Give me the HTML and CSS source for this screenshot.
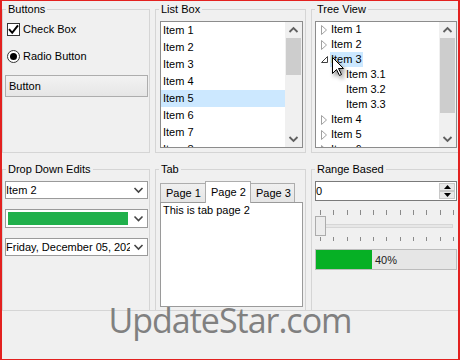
FILE: index.html
```html
<!DOCTYPE html>
<html>
<head>
<meta charset="utf-8">
<title>Controls</title>
<link rel="stylesheet" href="styles.css">
</head>
<body>
<div class="win">
  <div class="grid">
    <div class="group">
      <div class="legend">Buttons</div>
      <div class="opt-row check-row">
        <span class="checkbox"><svg width="11" height="11" viewBox="0 0 11 11"><path d="M1 5.2 L4.2 8.8 L10 1.4" fill="none" stroke="#000" stroke-width="2"/></svg></span>
        <span>Check Box</span>
      </div>
      <div class="opt-row radio-row">
        <span class="radio"><span class="dot"></span></span>
        <span>Radio Button</span>
      </div>
      <div class="button">Button</div>
    </div>

    <div class="group">
      <div class="legend">List Box</div>
      <div class="box listbox">
        <div class="items">
          <div class="item">Item 1</div>
          <div class="item">Item 2</div>
          <div class="item">Item 3</div>
          <div class="item">Item 4</div>
          <div class="item sel">Item 5</div>
          <div class="item">Item 6</div>
          <div class="item">Item 7</div>
          <div class="item">Item 8</div>
        </div>
        <div class="vscroll">
          <div class="sbtn"><svg width="17" height="16" viewBox="0 0 17 16"><path d="M4.5 10 L8.5 6 L12.5 10" fill="none" stroke="#606060" stroke-width="1.8"/></svg></div>
          <div class="thumb list-thumb"></div>
          <div class="sfill"></div>
          <div class="sbtn"><svg width="17" height="16" viewBox="0 0 17 16"><path d="M4.5 6 L8.5 10 L12.5 6" fill="none" stroke="#606060" stroke-width="1.8"/></svg></div>
        </div>
      </div>
    </div>

    <div class="group">
      <div class="legend">Tree View</div>
      <div class="box treebox">
        <div class="items">
          <div class="trow"><span class="tog"><svg width="14" height="15" viewBox="0 0 14 15"><path d="M5.5 3.5 L10.5 8 L5.5 12.5 Z" fill="none" stroke="#a0a0a0"/></svg></span><span class="tlabel">Item 1</span></div>
          <div class="trow"><span class="tog"><svg width="14" height="15" viewBox="0 0 14 15"><path d="M5.5 3.5 L10.5 8 L5.5 12.5 Z" fill="none" stroke="#a0a0a0"/></svg></span><span class="tlabel">Item 2</span></div>
          <div class="trow"><span class="tog"><svg width="14" height="15" viewBox="0 0 14 15"><path d="M11.5 4.5 L11.5 10.5 L5.5 10.5 Z" fill="none" stroke="#404040"/></svg></span><span class="tlabel sel">Item 3</span></div>
          <div class="trow child"><span class="tog"></span><span class="tlabel">Item 3.1</span></div>
          <div class="trow child"><span class="tog"></span><span class="tlabel">Item 3.2</span></div>
          <div class="trow child"><span class="tog"></span><span class="tlabel">Item 3.3</span></div>
          <div class="trow"><span class="tog"><svg width="14" height="15" viewBox="0 0 14 15"><path d="M5.5 3.5 L10.5 8 L5.5 12.5 Z" fill="none" stroke="#a0a0a0"/></svg></span><span class="tlabel">Item 4</span></div>
          <div class="trow"><span class="tog"><svg width="14" height="15" viewBox="0 0 14 15"><path d="M5.5 3.5 L10.5 8 L5.5 12.5 Z" fill="none" stroke="#a0a0a0"/></svg></span><span class="tlabel">Item 5</span></div>
          <div class="trow"><span class="tog"><svg width="14" height="15" viewBox="0 0 14 15"><path d="M5.5 3.5 L10.5 8 L5.5 12.5 Z" fill="none" stroke="#a0a0a0"/></svg></span><span class="tlabel">Item 6</span></div>
        </div>
        <div class="vscroll">
          <div class="sbtn"><svg width="17" height="16" viewBox="0 0 17 16"><path d="M4.5 10 L8.5 6 L12.5 10" fill="none" stroke="#606060" stroke-width="1.8"/></svg></div>
          <div class="thumb tree-thumb"></div>
          <div class="sfill"></div>
          <div class="sbtn"><svg width="17" height="16" viewBox="0 0 17 16"><path d="M4.5 6 L8.5 10 L12.5 6" fill="none" stroke="#606060" stroke-width="1.8"/></svg></div>
        </div>
      </div>
    </div>

    <div class="group">
      <div class="legend">Drop Down Edits</div>
      <div class="combo combo-first">
        <span class="combo-text">Item 2</span>
        <span class="combo-btn"><svg width="17" height="16" viewBox="0 0 17 16"><path d="M4.5 6 L8.5 10 L12.5 6" fill="none" stroke="#444" stroke-width="1.6"/></svg></span>
      </div>
      <div class="combo combo-color">
        <span class="combo-text"><span class="swatch"></span></span>
        <span class="combo-btn"><svg width="17" height="17" viewBox="0 0 17 17"><path d="M4.5 6.5 L8.5 10.5 L12.5 6.5" fill="none" stroke="#444" stroke-width="1.6"/></svg></span>
      </div>
      <div class="combo">
        <span class="combo-text">Friday, December 05, 2025</span>
        <span class="combo-btn"><svg width="17" height="16" viewBox="0 0 17 16"><path d="M4.5 6 L8.5 10 L12.5 6" fill="none" stroke="#444" stroke-width="1.6"/></svg></span>
      </div>
    </div>

    <div class="group">
      <div class="legend">Tab</div>
      <div class="tabs">
        <div class="tab">Page 1</div>
        <div class="tab active">Page 2</div>
        <div class="tab last">Page 3</div>
      </div>
      <div class="tabpanel">This is tab page 2</div>
    </div>

    <div class="group">
      <div class="legend">Range Based</div>
      <div class="spin">
        <span class="spin-val">0</span>
        <span class="spin-btns">
          <span class="sb"><svg width="7" height="4" viewBox="0 0 7 4"><path d="M0 4 L3.5 0 L7 4 Z" fill="#000"/></svg></span>
          <span class="sb"><svg width="7" height="4" viewBox="0 0 7 4"><path d="M0 0 L3.5 4 L7 0 Z" fill="#000"/></svg></span>
        </span>
      </div>
      <svg class="slider" width="142" height="34" viewBox="0 0 142 34">
        <g stroke="#8a8a8a" stroke-width="1">
          <path d="M5.5 2 V7 M18.5 2 V7 M32.5 2 V7 M45.5 2 V7 M58.5 2 V7 M71.5 2 V7 M85.5 2 V7 M98.5 2 V7 M111.5 2 V7 M125.5 2 V7 M138.5 2 V7"/>
          <path d="M5.5 29 V33 M18.5 29 V33 M32.5 29 V33 M45.5 29 V33 M58.5 29 V33 M71.5 29 V33 M85.5 29 V33 M98.5 29 V33 M111.5 29 V33 M125.5 29 V33 M138.5 29 V33"/>
        </g>
        <rect x="5.5" y="16.5" width="132" height="3" fill="#e7e7e7" stroke="#d6d6d6"/>
        <rect x="0.5" y="8.5" width="10" height="19" fill="#ececec" stroke="#acacac"/>
      </svg>
      <div class="progress">
        <div class="pfill" style="width:40%"></div>
        <span class="ptext">40%</span>
      </div>
    </div>
  </div>
  <div class="footer"></div>

  <svg class="cursor" width="16" height="24" viewBox="0 0 16 24"><path d="M1.5 1.5 L1.5 17.5 L5.5 13.5 L8.5 19.5 L10.5 18.5 L7.5 12.5 L12.5 12.5 Z" fill="#fff" stroke="#000" stroke-linejoin="round"/></svg>
  <div class="watermark">UpdateStar.com</div>
</div>
</body>
</html>
```

FILE: styles.css
```css
* { box-sizing: border-box; }
html, body { margin: 0; padding: 0; }
body {
  font: 11px "Liberation Sans", Arial, sans-serif;
  color: #000;
  background: #f0f0f0;
}
.win {
  position: relative;
  width: 460px;
  height: 360px;
  background: #f0f0f0;
  border: 1px solid #e3211f;
  border-left-width: 2px;
  border-right-width: 2px;
  overflow: hidden;
}
.grid {
  display: grid;
  grid-template-columns: 148px 151px 149px;
  grid-template-rows: 144px 142px;
  column-gap: 5px;
  row-gap: 16px;
  margin-top: 8px;
}
.group {
  border: 1px solid #d5d5d5;
  min-width: 0;
}
.legend {
  width: max-content;
  height: 14px;
  line-height: 14px;
  margin: -8px 0 0 3px;
  padding: 0 2px;
  background: #f0f0f0;
}

/* Buttons group */
.opt-row {
  display: flex;
  align-items: center;
  gap: 3px;
  height: 13px;
  line-height: 13px;
  margin-left: 4px;
}
.check-row { margin-top: 7px; }
.radio-row { margin-top: 14px; }
.checkbox {
  width: 13px;
  height: 13px;
  border: 1px solid #333;
  background: #fff;
  display: flex;
  align-items: center;
  justify-content: center;
}
.radio {
  width: 13px;
  height: 13px;
  border: 1px solid #333;
  border-radius: 50%;
  background: #fff;
  display: flex;
  align-items: center;
  justify-content: center;
}
.dot {
  width: 7px;
  height: 7px;
  border-radius: 50%;
  background: #000;
}
.button {
  margin: 12px 0 0 2px;
  width: 143px;
  height: 22px;
  line-height: 20px;
  padding-left: 3px;
  border: 1px solid #adadad;
  background: linear-gradient(#f2f2f2, #e6e6e6);
}

/* List / tree boxes */
.box {
  display: flex;
  height: 127px;
  margin-top: 5px;
  border: 1px solid #8c8c8c;
  background: #fff;
  overflow: hidden;
}
.listbox { margin-left: 4px; width: 143px; }
.treebox { margin-left: 3px; width: 142px; }
.items { flex: 1; min-width: 0; overflow: hidden; }
.item {
  height: 17px;
  line-height: 17px;
  padding-left: 2px;
  white-space: nowrap;
}
.item.sel { background: #cce8ff; }
.vscroll {
  width: 17px;
  flex: none;
  display: flex;
  flex-direction: column;
  background: #f0f0f0;
}
.sbtn { height: 16px; flex: none; }
.sbtn svg { display: block; }
.thumb {
  margin-left: 1px;
  width: 15px;
  background: #cdcdcd;
  flex: none;
}
.list-thumb { height: 37px; }
.tree-thumb { height: 75px; }
.sfill { flex: 1; }

.trow {
  display: flex;
  height: 15px;
  line-height: 15px;
  white-space: nowrap;
}
.trow.child { padding-left: 15px; }
.tog { width: 14px; flex: none; }
.tog svg { display: block; }
.tlabel { padding: 0 1px; }
.tlabel.sel { background: #cce8ff; }

/* Drop down edits */
.combo {
  display: flex;
  margin: 10px 0 0 2px;
  width: 143px;
  height: 18px;
  border: 1px solid #9a9a9a;
  background: #fff;
}
.combo-first { margin-top: 5px; }
.combo-color { height: 19px; }
.combo-text {
  flex: 1;
  min-width: 0;
  overflow: hidden;
  white-space: nowrap;
  line-height: 16px;
}
.combo-btn { width: 17px; flex: none; display: flex; align-items: center; }
.combo-btn svg { display: block; }
.swatch {
  display: block;
  margin: 2px 0 0 2px;
  width: 120px;
  height: 13px;
  background: #20b04b;
}

/* Tabs */
.tabs {
  display: flex;
  align-items: flex-start;
  margin: 5px 0 0 4px;
  height: 21px;
}
.tab {
  margin-top: 2px;
  width: 46px;
  height: 19px;
  line-height: 19px;
  padding-left: 5px;
  border: 1px solid #adadad;
  border-bottom: none;
  background: linear-gradient(#f0f0f0, #e5e5e5);
  white-space: nowrap;
}
.tab + .tab { margin-left: -1px; }
.tab.last { width: 45px; }
.tab.active {
  position: relative;
  z-index: 1;
  margin-top: 0;
  height: 22px;
  line-height: 20px;
  background: #fff;
}
.tabpanel {
  margin-left: 4px;
  width: 143px;
  height: 105px;
  border: 1px solid #9a9a9a;
  background: #fff;
  padding-left: 2px;
  line-height: 15px;
}

/* Range based */
.spin {
  display: flex;
  margin: 5px 0 0 3px;
  width: 142px;
  height: 20px;
  border: 1px solid #7a7a7a;
  background: #fff;
}
.spin-val { flex: 1; line-height: 18px; }
.spin-btns {
  width: 17px;
  flex: none;
  display: flex;
  flex-direction: column;
  padding: 1px 1px 1px 0;
}
.sb {
  flex: 1;
  display: flex;
  align-items: center;
  justify-content: center;
  background: #e8e8e8;
  border: 1px solid #c8c8c8;
}
.sb svg { display: block; }
.slider {
  display: block;
  margin: 7px 0 0 3px;
}
.progress {
  display: flex;
  align-items: center;
  margin: 7px 0 0 3px;
  width: 142px;
  height: 21px;
  border: 1px solid #bcbcbc;
  background: #e6e6e6;
}
.pfill { height: 100%; background: #06b025; flex: none; }
.ptext { margin-left: 3px; color: #222; }

.footer {
  margin-top: -1px;
  border-top: 1px solid #d5d5d5;
}

/* overlays */
.cursor {
  position: absolute;
  left: 329px;
  top: 55px;
  filter: drop-shadow(2px 3px 2px rgba(0, 0, 0, 0.45));
}
.watermark {
  position: absolute;
  left: 0;
  right: 0;
  top: 302px;
  text-align: center;
  font-family: "Open Sans", sans-serif;
  font-size: 34px;
  line-height: 34px;
  letter-spacing: -1px;
  color: #808080;
}
```
